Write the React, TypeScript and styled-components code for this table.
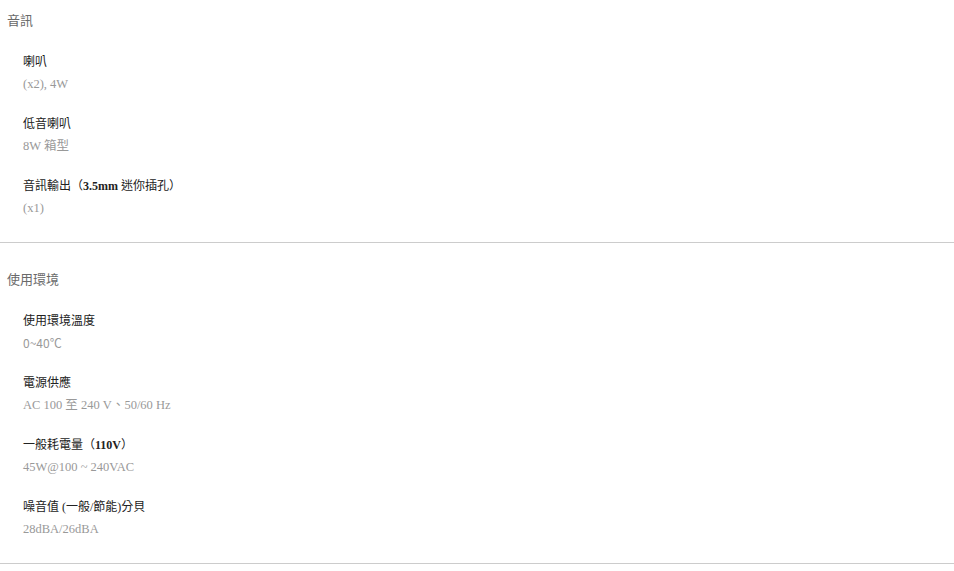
import React from 'react';
import styled, { createGlobalStyle } from 'styled-components';

const GlobalStyle = createGlobalStyle`
  html, body {
    margin: 0;
    padding: 0;
    background: #ffffff;
  }
  body {
    font-family: "Liberation Serif", "Noto Sans CJK TC", serif;
  }
`;

interface SpecItem {
  label: React.ReactNode;
  value: React.ReactNode;
  sansValue?: boolean;
}

interface SpecGroup {
  title: string;
  items: SpecItem[];
}

const groups: SpecGroup[] = [
  {
    title: '音訊',
    items: [
      { label: '喇叭', value: '(x2), 4W' },
      { label: '低音喇叭', value: '8W 箱型' },
      {
        label: (
          <>
            音訊輸出（<b>3.5mm</b> 迷你插孔）
          </>
        ),
        value: '(x1)',
      },
    ],
  },
  {
    title: '使用環境',
    items: [
      { label: '使用環境溫度', value: '0~40℃', sansValue: true },
      { label: '電源供應', value: 'AC 100 至 240 V、50/60 Hz' },
      {
        label: (
          <>
            一般耗電量（<b>110V</b>）
          </>
        ),
        value: '45W@100 ~ 240VAC',
      },
      { label: '噪音值 (一般/節能)分貝', value: '28dBA/26dBA' },
    ],
  },
];

const Page = styled.div`
  display: flex;
  flex-direction: column;
  width: 954px;
`;

const Section = styled.section<{ $flush?: boolean }>`
  display: flex;
  flex-direction: column;
  gap: 20px;
  padding: ${({ $flush }) => ($flush ? '9px' : '25px')} 0 23px 7px;
  border-bottom: 1px solid #cccccc;
`;

const SectionTitle = styled.h3`
  margin: 0;
  font-family: "Noto Sans CJK TC", sans-serif;
  font-size: 13px;
  font-weight: 400;
  line-height: 22px;
  color: #6a6a6a;
`;

const ItemList = styled.dl`
  display: flex;
  flex-direction: column;
  gap: 18px;
  margin: 0;
  padding-left: 16px;
`;

const Item = styled.div`
  display: flex;
  flex-direction: column;
`;

const Label = styled.dt`
  font-size: 12px;
  line-height: 22px;
  color: #222222;

  b {
    font-weight: 700;
  }
`;

const Value = styled.dd<{ $sans?: boolean }>`
  margin: 0;
  font-family: ${({ $sans }) =>
    $sans ? '"Noto Sans CJK TC", sans-serif' : '"Liberation Serif", "Noto Sans CJK TC", serif'};
  font-size: ${({ $sans }) => ($sans ? '12px' : '12.5px')};
  line-height: 22px;
  color: #999999;
`;

export default function App() {
  return (
    <>
      <GlobalStyle />
      <Page>
        {groups.map((group, i) => (
          <Section key={group.title} $flush={i === 0}>
            <SectionTitle>{group.title}</SectionTitle>
            <ItemList>
              {group.items.map((item, j) => (
                <Item key={j}>
                  <Label>{item.label}</Label>
                  <Value $sans={item.sansValue}>{item.value}</Value>
                </Item>
              ))}
            </ItemList>
          </Section>
        ))}
      </Page>
    </>
  );
}
